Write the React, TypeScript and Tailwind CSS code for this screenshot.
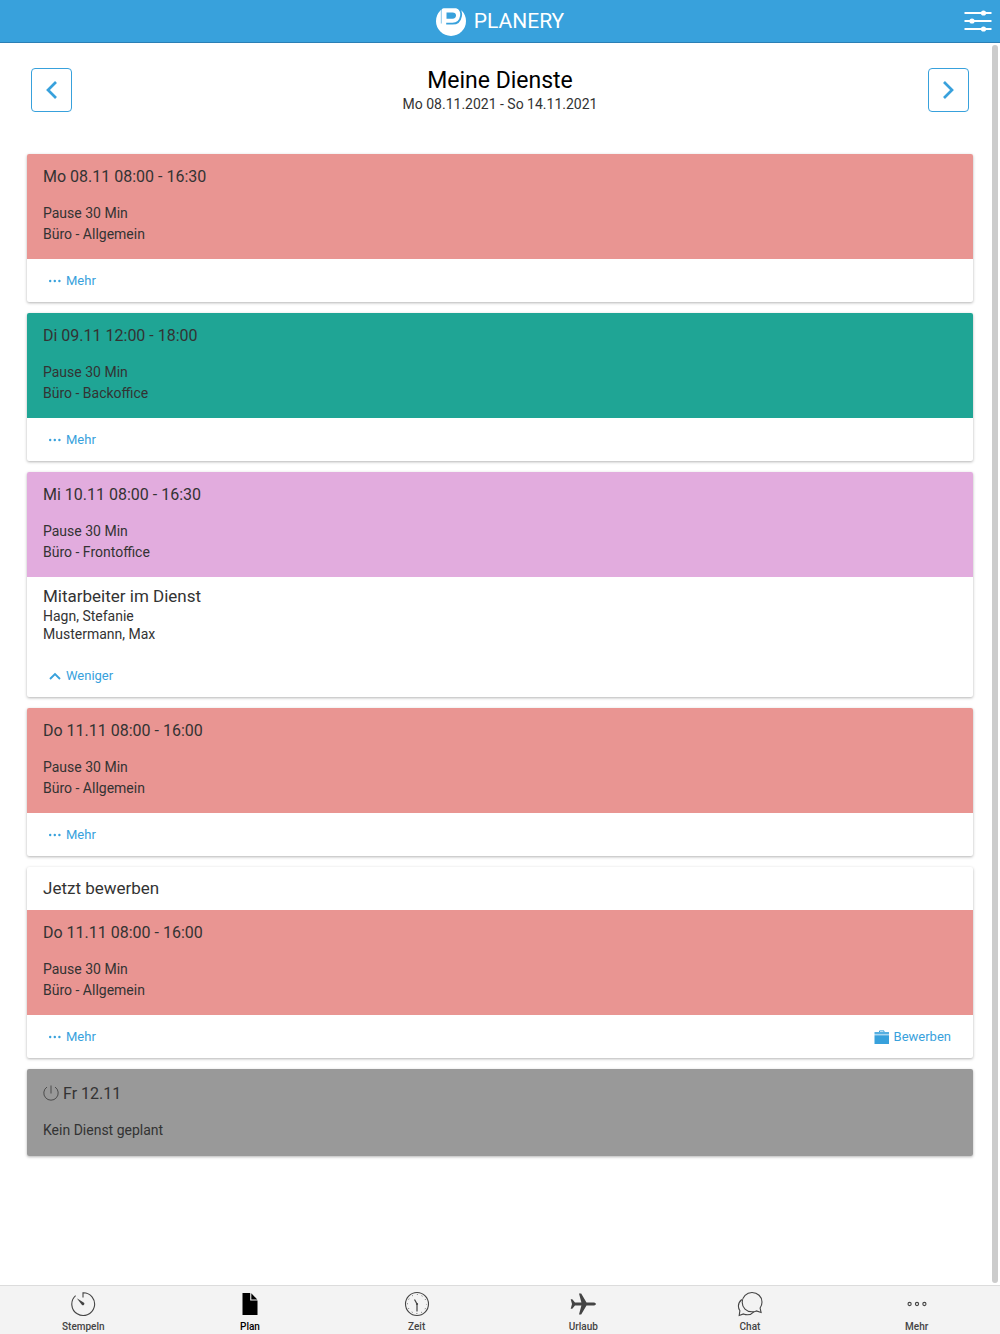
import type { ReactNode } from "react";

type Shift = {
  time: string;
  place: string;
  color: string;
  staff?: string[];
  apply?: boolean;
};

const shifts: Shift[] = [
  { time: "Mo 08.11 08:00 - 16:30", place: "Büro - Allgemein", color: "bg-[#e99592]" },
  { time: "Di 09.11 12:00 - 18:00", place: "Büro - Backoffice", color: "bg-[#1fa595]" },
  {
    time: "Mi 10.11 08:00 - 16:30",
    place: "Büro - Frontoffice",
    color: "bg-[#e2acde]",
    staff: ["Hagn, Stefanie", "Mustermann, Max"],
  },
  { time: "Do 11.11 08:00 - 16:00", place: "Büro - Allgemein", color: "bg-[#e99592]" },
  { time: "Do 11.11 08:00 - 16:00", place: "Büro - Allgemein", color: "bg-[#e99592]", apply: true },
];

const Logo = () => (
  <svg width="30" height="30" viewBox="0 0 30 30" aria-hidden="true">
    <circle cx="15" cy="15" r="15" fill="#fff" />
    <path d="M5 0h22v5L20 2.200H5z" fill="#38a1dc" />
    <path d="M5.300 0v17.500" stroke="#38a1dc" strokeWidth=".6" />
    <path d="M10.500 6.500h6c2.300 0 3.500 1.200 3.500 3s-1.200 3.200-3.500 3.200h-6z" fill="#38a1dc" />
    <path
      d="M22 1.500c2.600 2.500 3.600 5.200 3 8.500-.8 4.800-4 7.700-8.500 7.700h-6.300"
      fill="none"
      stroke="#38a1dc"
      strokeWidth="1.800"
    />
  </svg>
);

const Sliders = () => (
  <svg width="28" height="22" viewBox="0 0 28 22" fill="#fff" aria-hidden="true">
    <path d="M.5 3h27M.5 11h27M.5 19h27" stroke="#fff" strokeWidth="1.8" />
    <circle cx="19.500" cy="3" r="2.600" />
    <circle cx="8" cy="11" r="2.600" />
    <circle cx="19.500" cy="19" r="2.600" />
  </svg>
);

const Dots = () => (
  <svg width="14" height="14" viewBox="0 0 14 14" fill="currentColor" aria-hidden="true">
    <circle cx="2.200" cy="7" r="1.200" />
    <circle cx="6.800" cy="7" r="1.200" />
    <circle cx="11.400" cy="7" r="1.200" />
  </svg>
);

const ChevronUp = () => (
  <svg width="14" height="14" viewBox="0 0 14 14" aria-hidden="true">
    <path d="M2 10l5-5 5 5" fill="none" stroke="currentColor" strokeWidth="1.900" />
  </svg>
);

const Briefcase = () => (
  <svg width="16" height="14" viewBox="0 0 16 14" fill="currentColor" aria-hidden="true">
    <path d="M5.500 2V.9h4.500V2" fill="none" stroke="currentColor" />
    <path d="M.5 2h14.500v2.600H.5z" opacity=".85" />
    <path d="M.5 5.200h14.500V14H.5z" />
  </svg>
);

const Power = () => (
  <svg width="16" height="18" viewBox="0 0 16 18" fill="none" stroke="#444" strokeWidth=".9" aria-hidden="true">
    <path d="M8 .5v8M4 2a7.200 7.200 0 1 0 8 0" />
  </svg>
);

const tabs: { label: string; active?: boolean; icon: ReactNode }[] = [
  {
    label: "Stempeln",
    icon: (
      <>
        <path d="M13 6.500V1.700A11.400 11.400 0 1 1 5.600 4.600" fill="none" stroke="currentColor" strokeWidth="1.100" />
        <path d="M6.800 7.200l7.200 4.600a1.500 1.500 0 0 1-2 2.200z" />
      </>
    ),
  },
  {
    label: "Plan",
    active: true,
    icon: (
      <>
        <path d="M5.500 2h7.700v7.500h7.300V24h-15z" />
        <path d="M14.300 2.300l6 6.200h-6z" />
      </>
    ),
  },
  {
    label: "Zeit",
    icon: (
      <>
        <circle cx="13" cy="13" r="11.500" fill="none" stroke="currentColor" strokeWidth="1.100" />
        <circle cx="13" cy="13" r="9.500" fill="none" stroke="currentColor" strokeWidth="1" strokeDasharray=".8 4.174" strokeDashoffset=".4" />
        <path d="M10.500 8.500l2.500 4.500v7.500" fill="none" stroke="currentColor" strokeWidth="1.200" />
        <circle cx="13" cy="13" r="1.100" />
      </>
    ),
  },
  {
    label: "Urlaub",
    icon: (
      <path d="M9 2.500h2.200l5.300 9h6.500c1.700 0 3 .7 3 1.500s-1.300 1.500-3 1.500h-6.500l-5.300 9H9l2.400-9H5l-2.700 3.200H.7L2 13 .7 8.300h1.600L5 11.500h6.400z" />
    ),
  },
  {
    label: "Chat",
    icon: (
      <g fill="none" stroke="currentColor" strokeWidth="1.100">
        <path d="M15 1.500c5.600 0 10 4.200 10 9.500 0 2.400-.7 4.300-1.900 6l1 4.500-4.700-1.600c-1.300.6-2.700.9-4.400.9-5.600 0-9.800-4.200-9.800-9.600S9.500 1.500 15 1.500z" />
        <path d="M4.800 8.500C2.700 10.300 1.400 12.400 1.400 15c0 1.900.5 3.300 1.500 4.700l-.7 4.800 4.300-1.600c3.800 1.400 7.800.7 10.300-2.100" />
      </g>
    ),
  },
  {
    label: "Mehr",
    icon: (
      <g fill="none" stroke="currentColor" strokeWidth="1.100">
        <circle cx="5.600" cy="13" r="1.600" />
        <circle cx="13" cy="13" r="1.600" />
        <circle cx="20.400" cy="13" r="1.600" />
      </g>
    ),
  },
];

const NavButton = ({ label, path }: { label: string; path: string }) => (
  <button
    type="button"
    aria-label={label}
    className="flex h-11 w-[41px] items-center justify-center rounded border border-[#38a1dc] text-[#38a1dc]"
  >
    <svg width="20" height="20" viewBox="0 0 20 20" fill="none" stroke="currentColor" strokeWidth="2.700" aria-hidden="true">
      <path d={path} />
    </svg>
  </button>
);

const Card = ({ children }: { children: ReactNode }) => (
  <article className="overflow-hidden rounded-[2px] bg-white shadow-[0_1px_3px_rgba(0,0,0,0.3)]">{children}</article>
);

const ShiftCard = ({ shift }: { shift: Shift }) => (
  <Card>
    {shift.apply && <h2 className="px-4 pt-2.5 pb-[11px] text-[17px] leading-[22px]">Jetzt bewerben</h2>}
    <div className={`${shift.color} px-4 pt-3 pb-[14px]`}>
      <h2 className="mb-[15px] text-[16px] leading-[22px]">{shift.time}</h2>
      <p className="leading-[21px]">Pause 30 Min</p>
      <p className="leading-[21px]">{shift.place}</p>
    </div>
    {shift.staff && (
      <div className="px-4 pt-2 pb-[11px]">
        <h3 className="text-[17px] leading-[22px]">Mitarbeiter im Dienst</h3>
        {shift.staff.map((name) => (
          <p key={name} className="leading-[18px]">{name}</p>
        ))}
      </div>
    )}
    <div className="flex h-[43px] items-center justify-between pr-[22px] pl-[21px] text-[13px] text-[#38a1dc]">
      <button type="button" className="flex items-center gap-1">
        {shift.staff ? <ChevronUp /> : <Dots />}
        {shift.staff ? "Weniger" : "Mehr"}
      </button>
      {shift.apply && (
        <button type="button" className="flex items-center gap-1">
          <Briefcase />
          Bewerben
        </button>
      )}
    </div>
  </Card>
);

const App = () => {
  return (
    <div className="flex h-screen flex-col bg-white font-[Roboto,sans-serif] text-[14px] text-[#333]">
      <header className="grid h-[43px] shrink-0 grid-cols-[1fr_auto_1fr] items-center border-b border-[#2b7fb5] bg-[#38a1dc] px-2 text-white">
        <div className="col-start-2 flex items-center gap-2">
          <Logo />
          <span className="text-[21px] leading-6">PLANERY</span>
        </div>
        <button type="button" aria-label="Filter" className="justify-self-end">
          <Sliders />
        </button>
      </header>

      <div className="relative min-h-0 flex-1">
        <main className="h-full overflow-hidden px-[27px] pt-[25px]">
          <div className="mb-[40px] flex items-start justify-between px-1">
            <NavButton label="Vorherige Woche" path="M14 2L6 10l8 8" />
            <div className="text-center">
              <h1 className="text-[23px] leading-[26px] text-black">Meine Dienste</h1>
              <p className="leading-5">Mo 08.11.2021 - So 14.11.2021</p>
            </div>
            <NavButton label="Nächste Woche" path="M6 2l8 8-8 8" />
          </div>

          <div className="flex flex-col gap-[11px]">
            {shifts.map((shift, i) => (
              <ShiftCard key={i} shift={shift} />
            ))}
            <Card>
              <div className="bg-[#999] px-4 pt-[13px] pb-[15px]">
                <h2 className="mb-[14px] flex items-center gap-1 text-[16px] leading-6">
                  <Power />
                  Fr 12.11
                </h2>
                <p className="leading-[21px]">Kein Dienst geplant</p>
              </div>
            </Card>
          </div>
        </main>
        <div className="absolute top-0.5 right-0.5 bottom-0.5 w-1.5 rounded-full bg-[#ccc]" />
      </div>

      <nav className="grid h-[49px] shrink-0 grid-cols-6 border-t border-[#dcdcdc] bg-[#f3f3f3]">
        {tabs.map((tab) => (
          <a
            key={tab.label}
            href="#"
            className={`flex flex-col items-center pt-[5px] text-[10px] font-medium ${tab.active ? "text-black" : "text-[#444]"}`}
          >
            <svg width="26" height="26" viewBox="0 0 26 26" fill="currentColor" aria-hidden="true">
              {tab.icon}
            </svg>
            <span className="mt-0.5 leading-4">{tab.label}</span>
          </a>
        ))}
      </nav>
    </div>
  );
};
export default App;
